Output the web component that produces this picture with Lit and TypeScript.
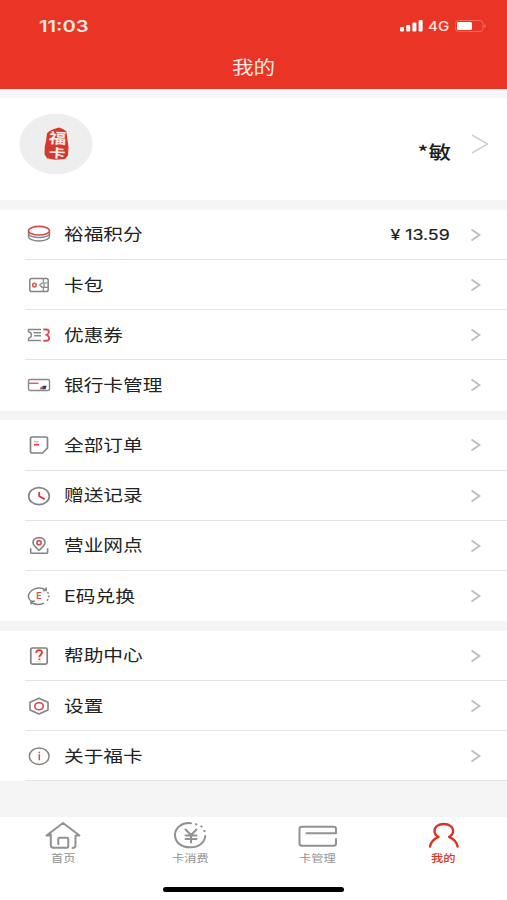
import { LitElement, html, css, svg } from "lit";
import { customElement, property } from "lit/decorators.js";

const icons: Record<string, unknown> = {
  points: svg`<g fill="none" stroke-width="1.400">
    <path d="M1.500 9v4.500c0 2.300 4.500 4.500 10.500 4.500s10.500-2.200 10.500-4.500V9" stroke="#858585"/>
    <path d="M1.500 10.500c0 2.300 4.500 4 10.500 4s10.500-1.700 10.500-4" stroke="#858585"/>
    <ellipse cx="12" cy="7.700" rx="10.500" ry="4.300" stroke="#d8474e" stroke-width="1.600"/></g>`,
  wallet: svg`<g fill="none" stroke="#858585" stroke-width="1.500">
    <rect x="2.800" y="5.500" width="18.400" height="13" rx="1.800"/>
    <path d="M16.300 5.700v3.600M16.300 15v3.500M21 10h-6l-2.300 2.100L15 14.300h6M17 10v4.300" stroke-width="1.200"/>
    <circle cx="7.400" cy="12.100" r="1.800" stroke="#e55048"/></g>`,
  coupon: svg`<g fill="none" stroke-width="1.400" stroke="#898989">
    <path d="M14 6.500H1.500v2.300c2.300.5 3 1.900 3 3.200s-.7 2.700-3 3.200v2.300H14M6.500 9.700h7.500M7 12.700h7"/>
    <path d="M16.300 6.500h3c3.300 0 3.300 3.800.3 5.500 3.300 1.500 3.300 5.700-.3 5.700h-3" stroke="#dc4a5e" stroke-width="1.900"/></g>`,
  bank: svg`<rect x="1.500" y="6.500" width="21" height="11" rx="1.500" fill="none" stroke="#898989" stroke-width="1.400"/>
    <path d="M2 10.300h9.500" stroke="#e35e68" stroke-width="1.500"/>
    <path d="M15.800 12.700h4l-1.300 3.500h-4z" fill="#27406f"/><path d="M13.700 13.700h2.600l-.8 2.500h-2.600z" fill="#df4850"/>`,
  orders: svg`<g fill="none" stroke-width="1.700">
    <path d="M5.200 4h13.600c1 0 1.700.6 1.700 1.600V15l-5 5H5.200c-1 0-1.700-.6-1.700-1.600V5.600C3.500 4.600 4.200 4 5.200 4z" stroke="#838383"/>
    <path d="M7 8.700h4.500" stroke="#e79c98" stroke-width="1.200"/><path d="M7 11.700h5" stroke="#df4039"/></g>`,
  clock: svg`<ellipse cx="12" cy="12.200" rx="10.300" ry="8.500" fill="none" stroke="#858585" stroke-width="1.700"/>
    <path d="M12.200 8v4.300l5.500 2.800" fill="none" stroke="#dc3740" stroke-width="1.800"/>`,
  pin: svg`<g fill="none" stroke="#838383" stroke-width="1.600">
    <path d="M12 16.300c-3.600-2.900-6-5-6-7.800 0-2.900 2.600-4.900 6-4.900s6 2 6 4.900c0 2.800-2.400 4.900-6 7.800z"/>
    <path d="M3.700 14.300v3.900c0 .7.600 1.100 1.300 1.100h14.300c.7 0 1.300-.4 1.300-1.100v-3.900"/>
    <circle cx="12" cy="8.700" r="2.100" stroke="#d84a4c"/></g>`,
  exchange: svg`<g fill="none" stroke="#858585" stroke-width="1.500">
    <path d="M4.300 17.300C1.500 15.300.7 12.300 2.200 9.300 3.900 5.900 9 3.300 14.500 4.200c1.700.3 3.200.9 4.300 1.700M19.200 3.500v3h-3.500"/>
    <path d="M4.500 18.500c3.600 2.300 8.800 2.500 12.500.7M4 20.500v-3.200h4"/>
    <path d="M20.500 8c2 2.800 1.800 6.700-1.400 9.500" stroke-dasharray="2 1.700"/></g>
    <text class="mark" x="12" y="15" text-anchor="middle">E</text>`,
  help: svg`<rect x="3.800" y="4" width="16.400" height="16.200" rx="1.600" fill="none" stroke="#838383" stroke-width="1.700"/>
    <path d="M9.200 8.900c.1-3.600 5.900-3.600 5.800-.3 0 2.300-2.600 2-2.600 4.600" fill="none" stroke="#df3a35" stroke-width="1.900"/>
    <path d="M12.400 14.500v1.600" stroke="#df3a35" stroke-width="1.900"/><path d="M9.500 17.800h5" stroke="#ccc" stroke-width=".8"/>`,
  settings: svg`<path d="M12 4.300l9 3.900v7.900L12 20l-9-3.900V8.200z" fill="none" stroke="#858585" stroke-width="1.600" stroke-linejoin="round"/>
    <ellipse cx="12" cy="12.200" rx="4.200" ry="3.500" fill="none" stroke="#dc4450" stroke-width="1.600"/>`,
  about: svg`<ellipse cx="12.200" cy="12.200" rx="9.900" ry="8.200" fill="none" stroke="#858585" stroke-width="1.500"/>
    <path d="M12.300 10.300v6M12.300 7.700v1.500" stroke="#d05058" stroke-width="1.500"/>`,
};

const tabIcons: Record<string, unknown> = {
  home: svg`<path d="M6.500 14.500H3.500L20 2l16.500 12.500h-3.300c-.5 0-.7.300-.7.800v9c0 1.700-1.200 2.600-3 2.600M7.800 13.500v10.800c0 1.600.9 2.400 2.700 2.400h13.300c1 0 1.500-.5 1.500-1.300V18c0-.9-.5-1.300-1.500-1.300h-7c-1 0-1.500.4-1.500 1.300v5.200"/>`,
  spend: svg`<path d="M21 2.200C12 1 5 6.800 5 14s6.200 12.300 15.200 12.300c8.400 0 14.500-4.500 15-11.300"/>
    <path d="M15.500 8.500l5.500 5.500 5.500-5.500M15.500 14.500h11M15.500 18h11M21 14v7.500"/>
    <path d="M26 3.300h.3M31.300 5.500h.3M34.300 10h.3" stroke-width="2.200"/>`,
  card: svg`<path d="M9.500 12.300H39V8c0-1.600-.8-2.300-2.500-2.300H5C3.300 5.700 2.500 6.400 2.500 8v14.500c0 1.600.8 2.300 2.500 2.300h31.500c1.700 0 2.500-.7 2.500-2.300v-4.500"/>`,
  mine: svg`<path d="M6 25.500c.6-4 3.700-7.300 8.500-9.600-2.700-1.500-4-3.400-4-6C10.500 5.700 14.500 3 19.800 3s9.300 2.700 9.300 6.900c0 2.600-1.400 4.500-4 6 4.800 2.300 7.900 5.600 8.500 9.600" stroke-width="2.400"/>`,
};

@customElement("menu-row")
class MenuRow extends LitElement {
  @property() icon = "";
  @property() label = "";
  @property() value = "";
  static styles = css`
    :host { display: flex; height: 50.2px; margin-left: 25px; padding: 1px 26px 0 2px; align-items: center;
      box-sizing: border-box; border-bottom: 1px solid #e3e3e3; }
    :host([last]) { border-bottom-color: transparent; }
    svg { display: block; flex: none; }
    .icon { width: 24px; height: 24px; margin-right: 12.500px; }
    .label { flex: 1; font: 400 16.400px/24px Inter, "Noto Sans CJK SC", sans-serif; color: #222; transform: scaleX(1.2); transform-origin: left; white-space: nowrap; margin-top: -1px; }
    .value { font: 400 14px/24px Inter, "Liberation Sans", sans-serif; color: #1c1c1c; -webkit-text-stroke: .2px #1c1c1c; transform: scaleX(1.27); transform-origin: right; margin-right: 20px; white-space: pre; }
    .mark { font: 700 9px Inter, sans-serif; fill: #e0525a; }
  `;
  render() {
    return html`<svg class="icon" viewBox="0 0 24 24">${icons[this.icon]}</svg>
      <span class="label">${this.label}</span>
      ${this.value ? html`<span class="value">${this.value}</span>` : ""}
      <svg width="11" height="14" viewBox="0 0 11 14"><path d="M1.500 1.500L9.500 7l-8 5.500" fill="none" stroke="#bcbcbc" stroke-width="1.700"/></svg>`;
  }
}

@customElement("app-root")
class AppRoot extends LitElement {
  static styles = css`
    :host { display: flex; flex-direction: column; height: 900px; background: #f5f5f5; overflow: hidden;
      font-family: "Noto Sans CJK SC", sans-serif; }
    svg { display: block; flex: none; }
    .head { height: 89px; background: #ea3526; color: #fff; flex: none; }
    .status { height: 52px; display: flex; align-items: center; justify-content: space-between; padding: 0 20px 0 39px; box-sizing: border-box; }
    .time { font: 600 16px/20px Inter, sans-serif; transform: scaleX(1.260); transform-origin: left; color: #ffe9e5; }
    .signal { display: flex; align-items: center; }
    .net { font: 500 13px/20px Inter, sans-serif; width: 22px; margin: 0 5px 0 5px; color: #ffe1dc; }
    .net span { display: block; transform: scaleX(1.16); transform-origin: left; }
    .title { text-align: center; font-size: 18px; line-height: 28px; transform: scaleX(1.2); color: #ffe9e5; }
    .profile { border-top: 9px solid #f4f7f5; height: 111px; background: #fff; display: flex; align-items: center; padding: 0 18px 0 19px; flex: none; box-sizing: border-box; }
    .avatar { margin-top: -11px; }
    .seal { font: 700 14.500px "Noto Sans CJK SC", sans-serif; fill: #f6e9e7; }
    .name { flex: 1; text-align: right; font-size: 18px; line-height: 28px; font-weight: 500; color: #1d1d1d; transform: scaleX(1.25); transform-origin: right; padding-top: 4px; }
    .go { margin: -11px 0 0 20px; }
    .group { margin-top: 9.8px; background: #fff; flex: none; }
    .tabs { margin-top: auto; height: 83px; background: #fff; display: grid; grid-template: 63px 20px / repeat(4, 1fr); flex: none; }
    .tab { display: flex; flex-direction: column; align-items: center; padding-top: 4px; color: #919191; }
    .tab svg { fill: none; stroke: currentColor; stroke-width: 2; stroke-linejoin: round; stroke-linecap: round; }
    .tab span { font-size: 10.200px; line-height: 16px; transform: scaleX(1.2); }
    .active { color: #dc3328; }
    .active span { font-weight: 500; }
    .bar { grid-column: 1 / -1; justify-self: center; width: 181px; height: 5px; margin-top: 7px; border-radius: 3px; background: #000; }
  `;
  groups = [
    [["points", "裕福积分", "¥ 13.59"], ["wallet", "卡包"], ["coupon", "优惠券"], ["bank", "银行卡管理"]],
    [["orders", "全部订单"], ["clock", "赠送记录"], ["pin", "营业网点"], ["exchange", "E码兑换"]],
    [["help", "帮助中心"], ["settings", "设置"], ["about", "关于福卡"]],
  ];
  tabs = [["home", "首页"], ["spend", "卡消费"], ["card", "卡管理"], ["mine", "我的"]];
  render() {
    return html`
      <header class="head">
        <div class="status">
          <span class="time">11:03</span>
          <div class="signal">
            <svg width="23" height="12" viewBox="0 0 23 12" fill="#fff"><rect y="7" width="4" height="4.500" rx="1"/><rect x="6.200" y="5" width="4" height="6.500" rx="1"/><rect x="12.400" y="2.500" width="4" height="9" rx="1"/><rect x="18.600" width="4" height="11.500" rx="1"/></svg>
            <div class="net"><span>4G</span></div>
            <svg width="32" height="12" viewBox="0 0 32 12"><rect x=".5" y=".5" width="27.500" height="11" rx="3" fill="none" stroke="#f0695a"/><rect x="2" y="2" width="15" height="8" rx="1.500" fill="#fff"/><path d="M29.500 4v4q2-2 0-4" fill="#f4907f"/></svg>
          </div>
        </div>
        <div class="title">我的</div>
      </header>
      <section class="profile">
        <svg class="avatar" width="74" height="62" viewBox="0 0 74 62">
          <ellipse cx="37" cy="31" rx="36.500" ry="30.300" fill="#eee"/>
          <path d="M35 16l5-1.500 4 1.500 3.500 2.500.7 7 1.300 8-.5 9-3 3.500-10 .8-8-1.500-2.500-4 .3-8 1.200-5 1-8 3-2.500z" fill="#d23a2e"/>
          <g class="seal"><text transform="translate(29.500 30) scale(1.200 1) rotate(4)">福</text><text transform="translate(29.500 44.300) scale(1.150 .85) rotate(3)">卡</text></g>
        </svg>
        <span class="name">*敏</span>
        <svg class="go" width="18" height="20" viewBox="0 0 18 20"><path d="M1 1l15.500 9L1 19" fill="none" stroke="#cfcfcf" stroke-width="1.500"/></svg>
      </section>
      ${this.groups.map((g, n) => html`<section class="group">
        ${g.map((r, i) => html`<menu-row .icon=${r[0]} .label=${r[1]} .value=${r[2] ?? ""} ?last=${n < 2 && i === g.length - 1}></menu-row>`)}
      </section>`)}
      <nav class="tabs">
        ${this.tabs.map((t) => html`<div class="tab ${t[0] === "mine" ? "active" : ""}">
          <svg width="40" height="29" viewBox="0 0 40 29">${tabIcons[t[0]]}</svg><span>${t[1]}</span></div>`)}
        <div class="bar"></div>
      </nav>`;
  }
}
